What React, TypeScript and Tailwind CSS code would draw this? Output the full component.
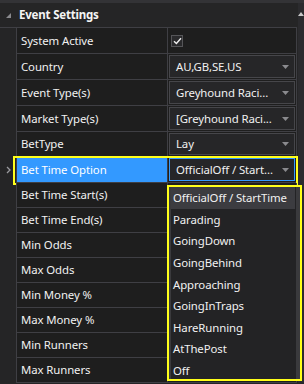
import React from "react";

type Row = {
  name: string;
  kind: "check" | "combo" | "text";
  value?: string;
  h: string;
  selected?: boolean;
};

const rows: Row[] = [
  { name: "System Active", kind: "check", h: "h-[26px]" },
  { name: "Country", kind: "combo", value: "AU,GB,SE,US", h: "h-[26px]" },
  { name: "Event Type(s)", kind: "combo", value: "Greyhound Raci...", h: "h-[26px]" },
  { name: "Market Type(s)", kind: "combo", value: "[Greyhound Raci...", h: "h-[26px]" },
  { name: "BetType", kind: "combo", value: "Lay", h: "h-[25px]" },
  { name: "Bet Time Option", kind: "combo", value: "OfficialOff / Start...", h: "h-[26px]", selected: true },
  { name: "Bet Time Start(s)", kind: "text", h: "h-[25px]" },
  { name: "Bet Time End(s)", kind: "text", h: "h-[25px]" },
  { name: "Min Odds", kind: "text", h: "h-[25px]" },
  { name: "Max Odds", kind: "text", h: "h-[25px]" },
  { name: "Min Money %", kind: "text", h: "h-[25px]" },
  { name: "Max Money %", kind: "text", h: "h-[25px]" },
  { name: "Min Runners", kind: "text", h: "h-[25px]" },
  { name: "Max Runners", kind: "text", h: "h-[25px]" },
];

const options = [
  "OfficialOff / StartTime",
  "Parading",
  "GoingDown",
  "GoingBehind",
  "Approaching",
  "GoingInTraps",
  "HareRunning",
  "AtThePost",
  "Off",
];

function Arrow() {
  return (
    <svg width="7" height="4" viewBox="0 0 7 4" className="shrink-0">
      <path d="M0 0 L7 0 L3.5 4 Z" fill="#8a8a8e" />
    </svg>
  );
}

function Cell({ row }: { row: Row }) {
  if (row.kind === "check") {
    return (
      <div className="flex h-full items-center pl-[2px]">
        <div className="flex h-[12px] w-[12px] items-center justify-center border border-[#555558] bg-[#2a2a2c]">
          <svg width="9" height="8" viewBox="0 0 9 8">
            <path d="M1 4.2 L3.4 6.5 L8 1.2" stroke="#f0f0f0" strokeWidth="1.4" fill="none" />
          </svg>
        </div>
      </div>
    );
  }
  if (row.kind === "combo") {
    return (
      <div
        className={`flex h-full items-center justify-between border bg-[#262628] pl-[6px] pr-[5px] ${
          row.selected ? "border-[#3399ff]" : "border-[#46464a]"
        }`}
      >
        <span className="whitespace-nowrap">{row.value}</span>
        <Arrow />
      </div>
    );
  }
  return null;
}

export default function App() {
  return (
    <div
      className="relative h-[384px] w-[304px] overflow-hidden bg-[#252526] text-[11.4px] tracking-[-0.1px] text-[#f1f1f1]"
      style={{ fontFamily: '"Segoe UI", "Noto Sans", sans-serif' }}
    >
      <div className="h-[3px] bg-[#333336]" />
      <div className="flex">
        <div className="w-[297px]">
          {/* header */}
          <div className="flex h-[24px] items-center">
            <div className="flex w-[16px] items-center justify-center">
              <svg width="5" height="5" viewBox="0 0 5 5">
                <path d="M5 0 L5 5 L0 5 Z" fill="#8a8a8e" />
              </svg>
            </div>
            <span className="pl-[3px] text-[11.5px] font-bold tracking-[-0.2px] text-[#f5f5f5]">Event Settings</span>
          </div>
          <div className="border-t border-[#3f3f44]">
            {rows.map((r) => (
              <div key={r.name} className={`relative flex ${r.h}`}>
                <div className="flex w-[16px] items-center justify-center">
                  {r.selected && (
                    <svg width="5" height="8" viewBox="0 0 5 8">
                      <path d="M1 1 L4 4 L1 7" stroke="#9a9a9e" strokeWidth="1.3" fill="none" />
                    </svg>
                  )}
                </div>
                <div
                  className={`flex w-[151px] items-center border-b border-l border-[#3f3f44] pl-[4px] ${
                    r.selected ? "bg-[#3399ff] text-white" : "bg-[#1e1e1e]"
                  }`}
                >
                  {r.name}
                </div>
                <div className="w-[130px] border-b border-l border-r border-[#3f3f44] bg-[#1e1e1e] p-[1px]">
                  <Cell row={r} />
                </div>
                {r.selected && (
                  <div className="pointer-events-none absolute left-[13px] right-[-1px] top-[-1px] bottom-[-2px] border-2 border-[#ffff1a]" />
                )}
              </div>
            ))}
          </div>
        </div>
        <div className="relative ml-[1px] flex-1 bg-[#2b2b2e]">
          <div className="flex justify-center pt-[9px]">
            <svg width="6" height="4" viewBox="0 0 6 4">
              <path d="M0 4 L3 0 L6 4 Z" fill="#c8c8c8" />
            </svg>
          </div>
        </div>
      </div>

      {/* dropdown popup */}
      <div className="absolute left-[167px] top-[185px] h-[196px] w-[135px] border-2 border-[#ffff1a] bg-[#1c1c1e]">
        <div className="flex h-full flex-col border-l-[2px] border-r-[4px] border-[#3a3a3d] bg-[#232325] pr-[1px]">
          {options.map((o, i) => (
            <div
              key={o}
              className={`flex h-[21.6px] shrink-0 items-center whitespace-nowrap pl-[2px] ${i === 0 ? "bg-[#3c3c40]" : ""}`}
            >
              {o}
            </div>
          ))}
        </div>
      </div>
    </div>
  );
}
